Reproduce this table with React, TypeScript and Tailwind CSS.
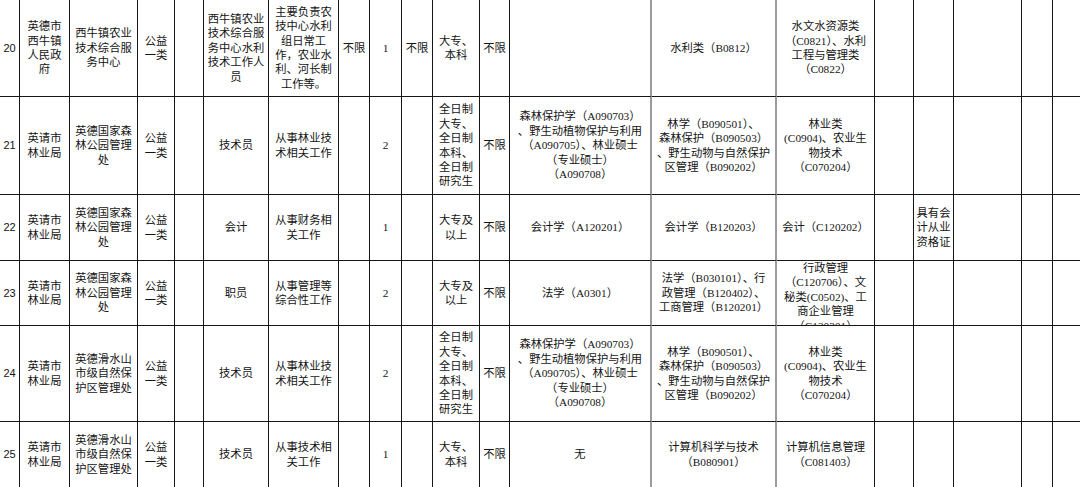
import React from "react";

type Row = string[];

const rows: Row[] = [
  [
    "20",
    "英德市\n西牛镇\n人民政\n府",
    "西牛镇农业\n技术综合服\n务中心",
    "公益\n一类",
    "",
    "西牛镇农业\n技术综合服\n务中心水利\n技术工作人\n员",
    "主要负责农\n技中心水利\n组日常工\n作，农业水\n利、河长制\n工作等。",
    "不限",
    "1",
    "不限",
    "大专、\n本科",
    "不限",
    "",
    "水利类（B0812）",
    "水文水资源类\n（C0821）、水利\n工程与管理类\n（C0822）",
    "",
    "",
    "",
    "",
    "",
  ],
  [
    "21",
    "英请市\n林业局",
    "英德国家森\n林公园管理\n处",
    "公益\n一类",
    "",
    "技术员",
    "从事林业技\n术相关工作",
    "",
    "2",
    "",
    "全日制\n大专、\n全日制\n本科、\n全日制\n研究生",
    "不限",
    "森林保护学（A090703）\n、野生动植物保护与利用\n（A090705）、林业硕士\n（专业硕士）\n（A090708）",
    "林学（B090501）、\n森林保护（B090503）\n、野生动物与自然保护\n区管理（B090202）",
    "林业类\n(C0904)、农业生\n物技术\n（C070204）",
    "",
    "",
    "",
    "",
    "",
  ],
  [
    "22",
    "英请市\n林业局",
    "英德国家森\n林公园管理\n处",
    "公益\n一类",
    "",
    "会计",
    "从事财务相\n关工作",
    "",
    "1",
    "",
    "大专及\n以上",
    "不限",
    "会计学（A120201）",
    "会计学（B120203）",
    "会计（C120202）",
    "",
    "具有会\n计从业\n资格证",
    "",
    "",
    "",
  ],
  [
    "23",
    "英请市\n林业局",
    "英德国家森\n林公园管理\n处",
    "公益\n一类",
    "",
    "职员",
    "从事管理等\n综合性工作",
    "",
    "2",
    "",
    "大专及\n以上",
    "不限",
    "法学（A0301）",
    "法学（B030101）、行\n政管理（B120402）、\n工商管理（B120201）",
    "行政管理\n（C120706）、文\n秘类(C0502)、工\n商企业管理\n（C120301）",
    "",
    "",
    "",
    "",
    "",
  ],
  [
    "24",
    "英请市\n林业局",
    "英德滑水山\n市级自然保\n护区管理处",
    "公益\n一类",
    "",
    "技术员",
    "从事林业技\n术相关工作",
    "",
    "2",
    "",
    "全日制\n大专、\n全日制\n本科、\n全日制\n研究生",
    "不限",
    "森林保护学（A090703）\n、野生动植物保护与利用\n（A090705）、林业硕士\n（专业硕士）\n（A090708）",
    "林学（B090501）、\n森林保护（B090503）\n、野生动物与自然保护\n区管理（B090202）",
    "林业类\n(C0904)、农业生\n物技术\n（C070204）",
    "",
    "",
    "",
    "",
    "",
  ],
  [
    "25",
    "英请市\n林业局",
    "英德滑水山\n市级自然保\n护区管理处",
    "公益\n一类",
    "",
    "技术员",
    "从事技术相\n关工作",
    "",
    "1",
    "",
    "大专、\n本科",
    "不限",
    "无",
    "计算机科学与技术\n（B080901）",
    "计算机信息管理\n（C081403）",
    "",
    "",
    "",
    "",
    "",
  ],
];

function cellClass(ri: number, ci: number): string {
  const base =
    "flex justify-center text-center whitespace-pre overflow-hidden border-b border-b-[#161616]";
  let right = "border-r border-r-[#161616]";
  if (ci === 12 || ci === 13) right = "border-r-2 border-r-[#9c9c9c]";
  if (ci === 19) right = "";
  const align = ri === 3 && ci === 14 ? "items-start pt-0" : "items-center";
  const font =
    ci === 0
      ? "font-['Liberation_Sans','Noto_Sans_CJK_SC',sans-serif] text-[11px]"
      : "";
  return [base, right, align, font].filter(Boolean).join(" ");
}

export default function App() {
  return (
    <div className="w-[1080px] h-[487px] overflow-hidden bg-white">
      <div className="grid grid-cols-[20px_50px_68px_37px_29px_65px_70px_31px_32px_31px_47px_30px_142px_125px_98px_39px_40px_68px_31px_27px] grid-rows-[97px_98px_66px_65px_96px_66px] font-['Liberation_Serif','Noto_Sans_CJK_SC',serif] text-[11.3px] leading-[14.4px] text-[#141414]">
        {rows.map((row, ri) =>
          row.map((cell, ci) => (
            <div key={`${ri}-${ci}`} className={cellClass(ri, ci)}>
              {cell}
            </div>
          ))
        )}
      </div>
    </div>
  );
}
